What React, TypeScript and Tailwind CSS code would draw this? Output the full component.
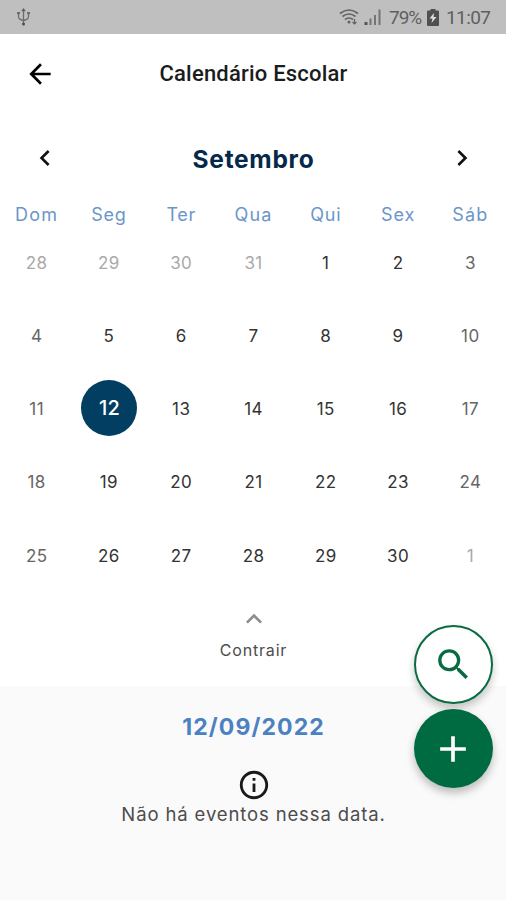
import React from "react";
import {
  MdAdd,
  MdArrowBack,
  MdChevronLeft,
  MdChevronRight,
  MdInfoOutline,
  MdKeyboardArrowUp,
  MdSearch,
} from "react-icons/md";

const weekdays = [
  { label: "Dom", className: "tracking-[1.3px]" },
  { label: "Seg", className: "tracking-[0.8px]" },
  { label: "Ter", className: "tracking-[0.6px]" },
  { label: "Qua", className: "tracking-[1.2px]" },
  { label: "Qui", className: "tracking-[0.7px]" },
  { label: "Sex", className: "tracking-[0.9px]" },
  { label: "Sáb", className: "tracking-[1.1px]" },
];

const weeks = [
  [28, 29, 30, 31, 1, 2, 3],
  [4, 5, 6, 7, 8, 9, 10],
  [11, 12, 13, 14, 15, 16, 17],
  [18, 19, 20, 21, 22, 23, 24],
  [25, 26, 27, 28, 29, 30, 1],
];

function StatusBar() {
  return (
    <div className="h-[34px] bg-[#bfbfbf] flex items-center justify-between pl-4 pr-[14px] text-[#5f5f5f]">
      <svg width="15" height="20" viewBox="0 0 15 20" fill="none" stroke="#6c6c6c" strokeWidth="1.3">
        <path d="M7.5 2.5v14M2.5 6v3.5q0 3 5 4 5-1 5-4V6" />
        <circle cx="7.5" cy="17" r="1.5" fill="#505050" stroke="none" />
        <path d="M5.2 4.2 7.5 1l2.3 3.2z" fill="#606060" stroke="none" />
        <path d="M1 6h3M11 6h3" strokeWidth="2" />
      </svg>
      <div className="flex items-center">
        <svg width="22" height="18" viewBox="0 0 22 18" fill="none" stroke="#626262" strokeWidth="1.6">
          <path d="M1 5.5q9-7 18 0M3.5 8.5q6.5-5 13 0M6 11.5q4-3 8 0" />
          <circle cx="10" cy="14" r="1.5" fill="#626262" stroke="none" />
          <path d="M15.5 11v5M13.5 14l2 2 2-2" strokeWidth="1.2" />
        </svg>
        <svg className="ml-[3px]" width="18" height="18" viewBox="0 0 18 18" fill="#747474">
          <rect x="0.5" y="14" width="3" height="3" fill="#555" />
          <rect x="5.5" y="10.5" width="2" height="6.5" />
          <rect x="10" y="7" width="2" height="10" />
          <rect x="14.5" y="1.5" width="2" height="15.5" />
        </svg>
        <span className="ml-[7px] w-[33px] whitespace-nowrap text-[19px] tracking-[-1px] mt-[3px]">79%</span>
        <svg className="ml-[5px]" width="12" height="17" viewBox="0 0 12 17">
          <path d="M3.5 0h5v1.5H11a1 1 0 0 1 1 1V16a1 1 0 0 1-1 1H1a1 1 0 0 1-1-1V2.5a1 1 0 0 1 1-1h2.5z" fill="#505050" />
          <path d="M7 4 2.5 9.5h3L4.5 14 9.5 8h-3z" fill="#e0e0e0" />
        </svg>
        <span className="ml-[7px] w-[46px] whitespace-nowrap text-[19px] tracking-[-0.6px] mt-[3px]">11:07</span>
      </div>
    </div>
  );
}

function dayColor(row: number, col: number) {
  if ((row === 0 && col < 4) || (row === 4 && col === 6)) return "text-[#a9a9a9]";
  if (col === 0 || col === 6) return "text-[#666]";
  return "text-[#333]";
}

function Day({ day, row, col }: { day: number; row: number; col: number }) {
  if (row === 2 && col === 1) {
    return (
      <div className="flex items-center justify-center">
        <div className="relative left-px -top-px size-14 shrink-0 rounded-full bg-[#023e62] text-white font-medium text-[20px] flex items-center justify-center">
          {day}
        </div>
      </div>
    );
  }
  return (
    <div className={`flex items-center justify-center pt-[2px] pl-px text-[17px] tracking-[0.4px] ${dayColor(row, col)}`}>
      {day}
    </div>
  );
}

export default function App() {
  return (
    <div className="relative w-[506px] h-[900px] overflow-hidden bg-white flex flex-col font-['Roboto',sans-serif]">
      <StatusBar />

      {/* Header */}
      <header className="h-[78px] shrink-0 flex items-center pl-6 pt-px">
        <MdArrowBack className="size-8 text-black" />
        <h1 className="flex-1 pb-px pr-[55px] text-center text-[22px] font-medium text-[#1c1c1c] tracking-[0.2px]">
          Calendário Escolar
        </h1>
      </header>

      {/* Calendar */}
      <main className="h-[574px] shrink-0 font-['Inter',sans-serif]">
        <div className="h-[92px] flex items-center justify-between pl-[29px] pr-7">
          <MdChevronLeft className="size-8 text-[#111]" />
          <h2 className="pt-[2px] text-[24.5px] font-bold text-[#04294a] tracking-[0.7px]">Setembro</h2>
          <MdChevronRight className="size-8 text-[#111]" />
        </div>
        <div className="h-[22px] grid grid-cols-7 text-[18px] leading-[22px] text-[#6c96c9]">
          {weekdays.map((d) => (
            <div key={d.label} className={`pl-px text-center ${d.className}`}>{d.label}</div>
          ))}
        </div>
        <div className="h-[366px] grid grid-cols-7 grid-rows-5">
          {weeks.map((week, row) =>
            week.map((day, col) => <Day key={`${row}-${col}`} day={day} row={row} col={col} />)
          )}
        </div>
        <div className="flex flex-col items-center pt-[11px] pl-px">
          <MdKeyboardArrowUp className="size-8 text-[#8c8c8c]" />
          <span className="mt-[3px] text-[16px] leading-6 text-[#4c4c4c] tracking-[0.8px]">Contrair</span>
        </div>
      </main>

      {/* Events of the selected day */}
      <section className="flex-1 bg-[#fafafa] flex flex-col items-center pl-px font-['Inter',sans-serif]">
        <h3 className="mt-[25px] text-[23px] leading-8 font-bold text-[#4b81c2] tracking-[1.1px]">12/09/2022</h3>
        <MdInfoOutline className="mt-[25px] size-[34px] text-[#1a1a1a]" />
        <p className="text-[18.5px] leading-6 text-[#4c4c4c] tracking-[0.87px] whitespace-nowrap">
          Não há eventos nessa data.
        </p>
      </section>

      {/* Floating actions */}
      <div className="absolute right-[13px] top-[625px] flex flex-col gap-[5px]">
        <button className="size-[79px] rounded-full bg-white border-2 border-[#0a6b42] text-[#0a6b42] flex items-center justify-center shadow-[0_5px_8px_rgba(0,0,0,0.22)]">
          <MdSearch className="size-[41px]" />
        </button>
        <button className="size-[79px] rounded-full bg-[#006b41] text-white flex items-center justify-center pr-px shadow-[0_5px_8px_rgba(0,0,0,0.25)]">
          <MdAdd className="size-[44px]" />
        </button>
      </div>
    </div>
  );
}
